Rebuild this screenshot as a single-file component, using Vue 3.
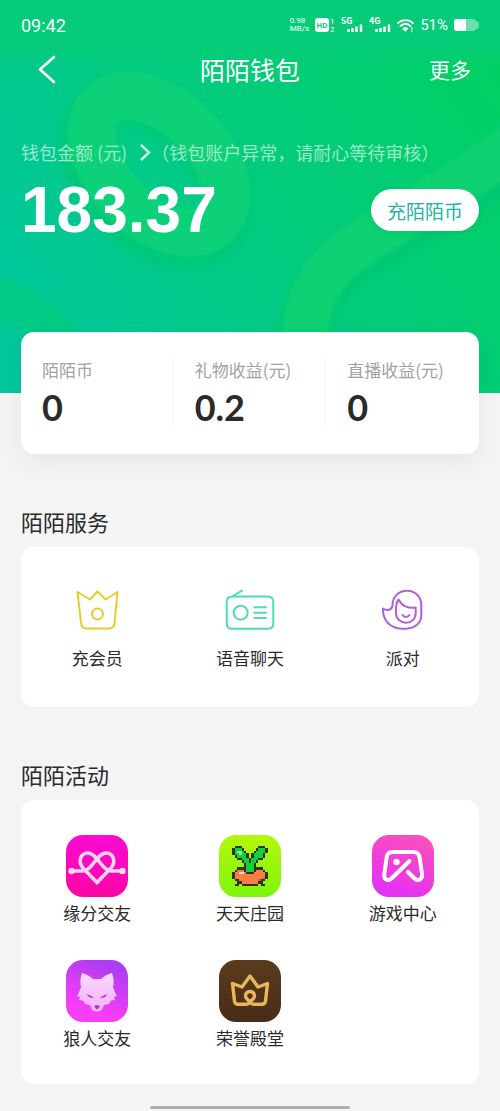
<script setup>
import { ref } from 'vue';

const balance = ref('183.37');

// 收益概览
const stats = [
  { label: '陌陌币', value: '0' },
  { label: '礼物收益(元)', value: '0.2' },
  { label: '直播收益(元)', value: '0' },
];

const services = [
  { id: 'vip', name: '充会员' },
  { id: 'voice', name: '语音聊天' },
  { id: 'party', name: '派对' },
];

const activities = [
  { id: 'fate', name: '缘分交友' },
  { id: 'farm', name: '天天庄园' },
  { id: 'game', name: '游戏中心' },
  { id: 'wolf', name: '狼人交友' },
  { id: 'honor', name: '荣誉殿堂' },
];

// 像素萝卜
const PIXEL_COLORS = {
  K: '#33301c',
  G: '#14cf3c',
  L: '#8df58a',
  O: '#fb7c45',
  W: '#ffd9bd',
  R: '#dd5a32',
};
const PIXEL_MAP = [
  '.KKK.......KKK.',
  'KGGGK.....KGGGK',
  'KGLLGK...KGGGGK',
  'KGGLGGK.KGGGGK.',
  '.KGGGGK.KGGGGK.',
  '..KKGGGKGGGKK..',
  '....KGGKGGK....',
  '.....KGGGK.....',
  '.....KGGGK.....',
  '..KKKKGGGKKKK..',
  '.KOOOKGGGKOOOK.',
  'KOOWWOKKKOOOOOK',
  'KOOOOOOOOOOOOOK',
  'KOOOOOOOOOOOORK',
  '.KKOOOOOOOORKK.',
  '..KKOOOOOOOKK..',
  '.KK.KKKKKKK.KK.',
];
const pixels = PIXEL_MAP.flatMap((line, y) =>
  [...line]
    .map((ch, x) => ({ x, y, color: PIXEL_COLORS[ch] }))
    .filter((p) => p.color)
);
</script>

<template>
  <div class="wallet">
    <header class="hero">
      <svg class="hero-bg" viewBox="0 0 500 393" preserveAspectRatio="xMidYMid slice" aria-hidden="true">
        <defs>
          <linearGradient id="base" x1="0" y1="0.7" x2="1" y2="0.2">
            <stop offset="0" stop-color="#00c79a" />
            <stop offset="0.5" stop-color="#03cb7e" />
            <stop offset="1" stop-color="#00d064" />
          </linearGradient>
          <linearGradient id="top" x1="0" y1="0" x2="0" y2="1">
            <stop offset="0" stop-color="#06cb79" />
            <stop offset="0.6" stop-color="#06cb79" />
            <stop offset="1" stop-color="#06cb79" stop-opacity="0" />
          </linearGradient>
          <filter id="soft" x="-20%" y="-20%" width="140%" height="140%">
            <feGaussianBlur stdDeviation="3" />
          </filter>
        </defs>
        <rect width="500" height="393" fill="url(#base)" />
        <g fill="none" filter="url(#soft)">
          <ellipse cx="158" cy="171" rx="84" ry="53" transform="rotate(46 158 171)" stroke="#05c77a" stroke-width="58" />
          <ellipse cx="159" cy="164" rx="82" ry="50" transform="rotate(46 159 164)" stroke="#0ad178" stroke-width="48" />
          <path d="M304 350C304 280 350 258 400 228C440 204 480 180 520 150" stroke="#04c772" stroke-width="56" />
          <path d="M304 350C302 276 346 252 396 222C436 198 476 172 520 142" stroke="#09d172" stroke-width="46" />
          <path d="M-20 296C20 300 50 320 72 352" stroke="#06ca83" stroke-width="40" />
        </g>
        <rect width="500" height="70" fill="url(#top)" />
      </svg>

      <div class="status-bar">
        <span class="time">09:42</span>
        <div class="status-icons">
          <span class="speed"><span>0.98</span><span>MB/s</span></span>
          <svg width="20" height="16" viewBox="0 0 20 16">
            <rect x="0" y="1" width="14" height="14" rx="3" fill="#fff" />
            <text x="7" y="11" class="hd">HD</text>
            <text x="15" y="7" class="sim">1</text>
            <text x="15" y="15" class="sim">2</text>
          </svg>
          <svg v-for="net in ['5G', '4G']" :key="net" width="22" height="16" viewBox="0 0 22 16">
            <text x="0" y="7" class="net">{{ net }}</text>
            <path d="M7.500 15v-3M11.500 15v-4M15.500 15v-5.500M20 15v-7.500" stroke="#fff" stroke-width="2.400" />
          </svg>
          <svg width="17" height="16" viewBox="0 0 17 16" fill="none" stroke="#fff" stroke-width="1.800" stroke-linecap="round">
            <path d="M1 6.200C5 2 12 2 16 6.200M3.500 9C6.500 6 10.500 6 13.500 9" />
            <path d="M6 11.500c1.500-1.300 3.500-1.300 5 0l-2.500 2.600z" fill="#fff" stroke-width="1" />
            <path d="M14.800 11v1M14.800 14v.5" stroke-width="1.400" />
          </svg>
          <span class="percent">51%</span>
          <svg width="25" height="16" viewBox="0 0 25 16">
            <rect x="0" y="2" width="22" height="12" rx="3" fill="#fff" opacity="0.4" />
            <path d="M22 4c2 0 3 2 3 4s-1 4-3 4z" fill="#fff" opacity="0.4" />
            <path d="M3 2h9v12H3a3 3 0 0 1-3-3V5a3 3 0 0 1 3-3z" fill="#fff" />
          </svg>
        </div>
      </div>

      <nav class="nav">
        <button class="back" type="button" aria-label="返回">
          <svg width="32" height="32" viewBox="0 0 32 32">
            <path d="M25 4L11 16.500L25 29" fill="none" stroke="#fff" stroke-width="2.600" stroke-linecap="round" stroke-linejoin="round" />
          </svg>
        </button>
        <h1 class="title">陌陌钱包</h1>
        <button class="more" type="button">更多</button>
      </nav>

      <a class="account" href="#">
        <span>钱包金额 (元)</span>
        <svg width="12" height="18" viewBox="0 0 12 18">
          <path d="M2 2L10 9.500L2 17" fill="none" stroke="#fff" stroke-opacity="0.8" stroke-width="2.400" />
        </svg>
        <span>（钱包账户异常，请耐心等待审核）</span>
      </a>

      <div class="balance-row">
        <strong class="balance">{{ balance }}</strong>
        <button class="recharge" type="button">充陌陌币</button>
      </div>
    </header>

    <main class="content">
      <section class="card stats">
        <div v-for="item in stats" :key="item.label" class="stat">
          <span class="stat-label">{{ item.label }}</span>
          <span class="stat-value">{{ item.value }}</span>
        </div>
      </section>

      <h2 class="section-title">陌陌服务</h2>
      <section class="card grid services">
        <button v-for="item in services" :key="item.id" class="entry service" type="button">
          <svg class="service-icon" :class="item.id" viewBox="0 0 50 50">
            <template v-if="item.id === 'vip'">
              <path d="M5.500 7L18 14.500L25.500 6.500L33.500 14.500L45.500 7L42.500 38Q42 43.500 37 43.500H14.500Q9.500 43.500 9 38Z" />
              <circle cx="25.500" cy="29" r="5.500" />
            </template>
            <template v-else-if="item.id === 'voice'">
              <path d="M7 11.500H43Q48.300 11.500 48.300 17V38Q48.300 43.800 43 43.800H7Q1.700 43.800 1.700 38V17Q1.700 11.500 7 11.500L17 5.700" />
              <circle cx="15.700" cy="27.700" r="7" />
              <path d="M29.300 22.300H41M29.300 27.700H41M29.300 33H41" />
            </template>
            <template v-else>
              <path d="M5 23.500C4.500 36 13 43.700 24 43.700H28C37 43.700 43.300 38 43.300 30V20C43.300 11.500 37 5.700 29 5.700C20.500 5.700 14.500 12 14.500 20C14.500 25 9 26.500 5 23.500Z" />
              <path d="M20.500 14.500C17.500 18 18 22 18 28C18 34 22.500 37.700 28 37.700C33.500 37.700 37.700 34 37.700 28V22.500C30 24 23.500 20.500 20.500 14.500Z" />
              <path d="M24.500 30C26 32.500 30 32.500 31.500 30" />
            </template>
          </svg>
          <span>{{ item.name }}</span>
        </button>
      </section>

      <h2 class="section-title">陌陌活动</h2>
      <section class="card grid activities">
        <button v-for="item in activities" :key="item.id" class="entry activity" type="button">
          <span class="activity-icon" :class="item.id">
            <svg v-if="item.id === 'fate'" viewBox="0 0 62 62">
              <g fill="none" stroke="#ffd3f3" stroke-width="3.600" stroke-linecap="round" stroke-linejoin="round">
                <path d="M7 36H17C26 36 31 18 40 18C48 18 50 27 45 33L31 47.500" />
                <path d="M55 36H45C36 36 31 18 22 18C14 18 12 27 17 33L31 47.500" />
              </g>
              <circle cx="5.500" cy="36" r="3.200" fill="#ffd3f3" />
              <circle cx="56.500" cy="36" r="3.200" fill="#ffd3f3" />
            </svg>
            <svg v-else-if="item.id === 'farm'" viewBox="0 0 62 62" shape-rendering="crispEdges">
              <g transform="translate(13.300 11) scale(2.360)">
                <rect v-for="p in pixels" :key="`${p.x}-${p.y}`" :x="p.x" :y="p.y" width="1" height="1" :fill="p.color" />
              </g>
            </svg>
            <svg v-else-if="item.id === 'game'" viewBox="0 0 62 62">
              <path d="M36 37L42 43C46 47 51 44 50 39L47.500 22Q46.500 17 41.500 17H20.500Q15.500 17 14.700 22L12.300 39C11.500 45 16.500 46.500 20 43L37.500 26" fill="none" stroke="#fff" stroke-width="4" stroke-linecap="round" stroke-linejoin="round" />
              <circle cx="24.500" cy="27" r="3.200" fill="#fff" />
            </svg>
            <svg v-else-if="item.id === 'wolf'" viewBox="0 0 62 62">
              <defs>
                <linearGradient id="fur" x1="0" y1="0" x2="0" y2="1">
                  <stop offset="0" stop-color="#f8d9ff" />
                  <stop offset="1" stop-color="#f3b0fb" />
                </linearGradient>
              </defs>
              <path d="M16 13C20 14 24 16 27 19H35C38 16 42 14 46 13C48 18 48 23 47 27C48 30 49 33 51 36L48 37L49 40L45 40.500L43 44L38 45L36 50Q31 53 26 50L24 45L19 44L17 40.500L13 40L14 37L11 36C13 33 14 30 15 27C14 23 14 18 16 13Z" fill="url(#fur)" />
              <path d="M21 34L28 37.500Q23 39 21 34ZM41 34L34 37.500Q39 39 41 34ZM28 46Q31 44.500 34 46L31.800 49H30.200Z" fill="#b02fd0" />
            </svg>
            <svg v-else viewBox="0 0 62 62">
              <path d="M28 39C25 36 27 31.500 31 31.500C35 31.500 37 36 34 39L30 43Q29 44.300 27 44.300H19Q16 44.300 15.500 41L13.500 23.500L23 27L31 16L39 27L48.500 23.500L46.500 41Q46 44.300 43 44.300H35Q33 44.300 32 43Z" fill="none" stroke="#e9b659" stroke-width="3.400" stroke-linejoin="round" />
            </svg>
          </span>
          <span>{{ item.name }}</span>
        </button>
      </section>
    </main>

    <div class="home-indicator"></div>
  </div>
</template>

<style>
body {
  background-color: #f4f4f4;
}
</style>

<style scoped>
.wallet {
  font-family: 'Noto Sans CJK SC', sans-serif;
  color: #2a2a2a;
  background-color: #f4f4f4;
}

button {
  border: none;
  background: none;
  padding: 0;
  font-family: inherit;
  color: inherit;
  cursor: pointer;
}

svg {
  display: block;
}

.hero {
  position: relative;
  padding: 0 21px 147px;
  color: #fff;
  overflow: hidden;
}

.hero > * {
  position: relative;
}

.hero > .hero-bg {
  position: absolute;
  inset: 0;
  width: 100%;
  height: 100%;
}

.status-bar {
  display: flex;
  align-items: center;
  justify-content: space-between;
  height: 50px;
  font-family: Roboto, sans-serif;
}

.time {
  font-size: 18px;
}

.status-icons {
  display: flex;
  align-items: center;
  gap: 6px;
}

.speed {
  display: flex;
  flex-direction: column;
  font-size: 8px;
  line-height: 8px;
}

.percent {
  font-size: 15px;
}

.hd {
  font-size: 8px;
  font-weight: 700;
  fill: #06cb79;
  text-anchor: middle;
}

.sim {
  font-size: 8px;
  fill: #fff;
}

.net {
  font-size: 9px;
  font-weight: 700;
  fill: #fff;
}

.nav {
  display: grid;
  grid-template-columns: 1fr auto 1fr;
  align-items: center;
  height: 38px;
  padding: 0 8px;
}

.back {
  justify-self: start;
}

.title {
  margin: 0;
  font-size: 25px;
  line-height: 36px;
  font-weight: 400;
}

.more {
  justify-self: end;
  font-size: 21px;
  line-height: 36px;
}

.account {
  display: flex;
  align-items: center;
  margin-top: 52px;
  font-size: 18px;
  line-height: 24px;
  white-space: nowrap;
  color: rgba(255, 255, 255, 0.6);
  text-decoration: none;
}

.account svg {
  margin-left: 12px;
}

.balance-row {
  display: flex;
  align-items: center;
  justify-content: space-between;
  height: 72px;
  margin-top: 10px;
}

.balance {
  font-family: 'Liberation Sans', sans-serif;
  font-size: 64px;
  font-weight: 700;
  line-height: 72px;
}

.recharge {
  height: 42px;
  padding: 0 16px;
  border-radius: 21px;
  background-color: #fff;
  color: #20b5a0;
  font-size: 19px;
  box-shadow: 0 2px 6px rgba(0, 120, 70, 0.12);
}

.content {
  position: relative;
  padding: 0 21px;
  margin-top: -61px;
}

.card {
  background-color: #fff;
  border-radius: 13px;
}

.stats {
  display: grid;
  grid-template-columns: repeat(3, 1fr);
  padding: 26px 0 25px;
  box-shadow: 0 8px 24px rgba(0, 0, 0, 0.06);
}

.stat {
  display: flex;
  flex-direction: column;
  gap: 3px;
  padding-left: 21px;
  white-space: nowrap;
}

.stat + .stat {
  box-shadow: -1px 0 #f7f7f7;
}

.stat-label {
  font-size: 17px;
  line-height: 24px;
  color: #a2a2a2;
}

.stat-value {
  font-family: Lato, sans-serif;
  font-size: 36px;
  font-weight: 700;
  line-height: 44px;
}

.section-title {
  margin: 52px 0 11px;
  font-size: 22px;
  font-weight: 400;
  line-height: 30px;
}

.grid {
  display: grid;
  grid-template-columns: repeat(3, 1fr);
  row-gap: 35px;
}

.services {
  padding: 38px 0 37px;
}

.activities {
  padding: 35px 0 34px;
}

.entry {
  display: flex;
  flex-direction: column;
  align-items: center;
  font-size: 17px;
  line-height: 24px;
}

.service {
  gap: 11px;
}

.activity {
  gap: 4px;
}

.service-icon {
  width: 50px;
  height: 50px;
  fill: none;
  stroke-width: 2;
  stroke-linecap: round;
  stroke-linejoin: round;
}

.vip {
  stroke: #ecc92c;
}

.voice {
  stroke: #4fdcb4;
}

.party {
  stroke: #b35fdc;
}

.activity-icon {
  width: 62px;
  height: 62px;
  border-radius: 17px;
  overflow: hidden;
}

.fate {
  background: linear-gradient(180deg, #fb0bd4, #fb05a4);
}

.farm {
  background: linear-gradient(180deg, #b5f80c, #7df50c);
}

.game {
  background: linear-gradient(20deg, #e02cff, #ff52b4);
}

.wolf {
  background: linear-gradient(200deg, #9d3df0, #f63df8 75%);
}

.honor {
  background: linear-gradient(180deg, #5b3b1d, #472c17);
}

.home-indicator {
  width: 40%;
  height: 3px;
  margin: 22px auto 0;
  border-radius: 2px;
  background-color: #b0b0b0;
}
</style>
